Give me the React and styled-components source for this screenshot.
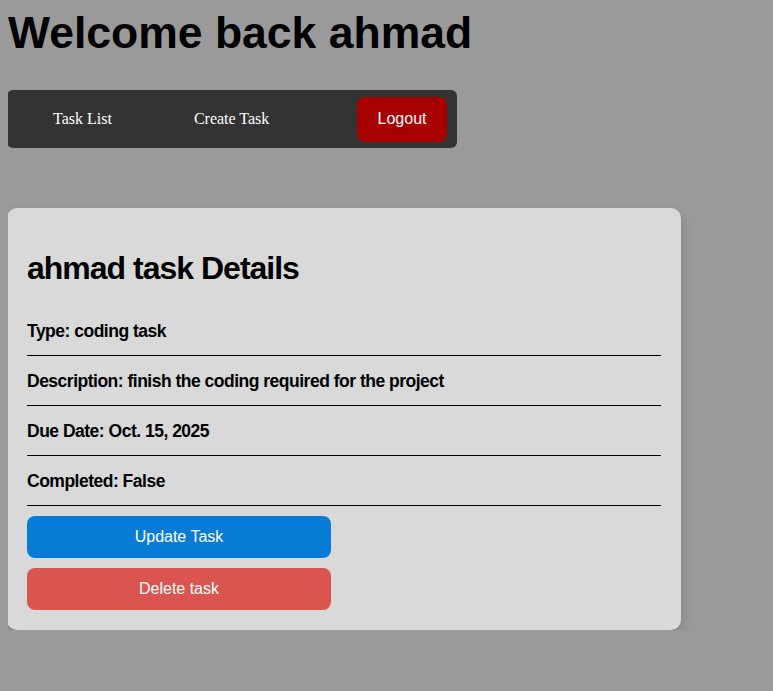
import React from "react";
import styled, { createGlobalStyle } from "styled-components";

const GlobalStyle = createGlobalStyle`
  html, body { background: #9a9a9a; }
  body { margin: 8px; font-family: "Liberation Serif", serif; }
`;

const Page = styled.div`
  display: flex;
  flex-direction: column;
  align-items: flex-start;
`;

const Heading = styled.h1`
  margin: 0 0 32px 0;
  font-family: "Liberation Sans", Arial, sans-serif;
  font-weight: 700;
  font-size: 44.5px;
  line-height: 50px;
  color: #000;
`;

const Nav = styled.nav`
  box-sizing: border-box;
  width: 450px;
  height: 58px;
  margin-left: -1px;
  padding: 0 10px;
  display: flex;
  align-items: center;
  gap: 10px;
  background: #333333;
  border-radius: 6px;
`;

const NavLink = styled.a`
  padding: 0 36px;
  color: #fff;
  text-decoration: none;
  font-family: "Liberation Serif", "Times New Roman", serif;
  font-size: 16px;
`;

const LogoutButton = styled.button`
  margin-left: auto;
  width: 90px;
  height: 45px;
  border: none;
  border-radius: 8px;
  background: #a80000;
  color: #fff;
  font-family: "Liberation Sans", Arial, sans-serif;
  font-size: 16px;
  cursor: pointer;
`;

const Card = styled.section`
  box-sizing: border-box;
  width: 674px;
  margin-top: 60px;
  margin-left: -1px;
  padding: 20px;
  background: #d9d9d9;
  border-radius: 10px;
  box-shadow: 0 5px 12px rgba(0, 0, 0, 0.18);
  font-family: "Liberation Sans", Arial, sans-serif;
  color: #000;
`;

const Title = styled.h2`
  margin: 24px 0 22px;
  font-size: 32px;
  line-height: 32px;
  letter-spacing: -1px;
  font-weight: 700;
`;

const Row = styled.p`
  box-sizing: border-box;
  margin: 0;
  height: 50px;
  padding-top: 1px;
  display: flex;
  align-items: center;
  border-bottom: 1px solid #000;
  font-size: 17.5px;
  letter-spacing: -0.5px;
  font-weight: 700;
`;

const Actions = styled.div`
  display: flex;
  flex-direction: column;
  gap: 10px;
  margin-top: 10px;
`;

const ActionButton = styled.button`
  width: 304px;
  height: 42px;
  border: none;
  border-radius: 8px;
  background: ${(p) => (p.$danger ? "#db5550" : "#077cd7")};
  color: #fff;
  font-family: "Liberation Sans", Arial, sans-serif;
  font-size: 16px;
  cursor: pointer;
`;

export default function App() {
  return (
    <Page>
      <GlobalStyle />
      <Heading>Welcome back ahmad</Heading>
      <Nav>
        <NavLink href="#">Task List</NavLink>
        <NavLink href="#">Create Task</NavLink>
        <LogoutButton>Logout</LogoutButton>
      </Nav>
      <Card>
        <Title>ahmad task Details</Title>
        <Row>Type: coding task</Row>
        <Row>Description: finish the coding required for the project</Row>
        <Row>Due Date: Oct. 15, 2025</Row>
        <Row>Completed: False</Row>
        <Actions>
          <ActionButton>Update Task</ActionButton>
          <ActionButton $danger>Delete task</ActionButton>
        </Actions>
      </Card>
    </Page>
  );
}
